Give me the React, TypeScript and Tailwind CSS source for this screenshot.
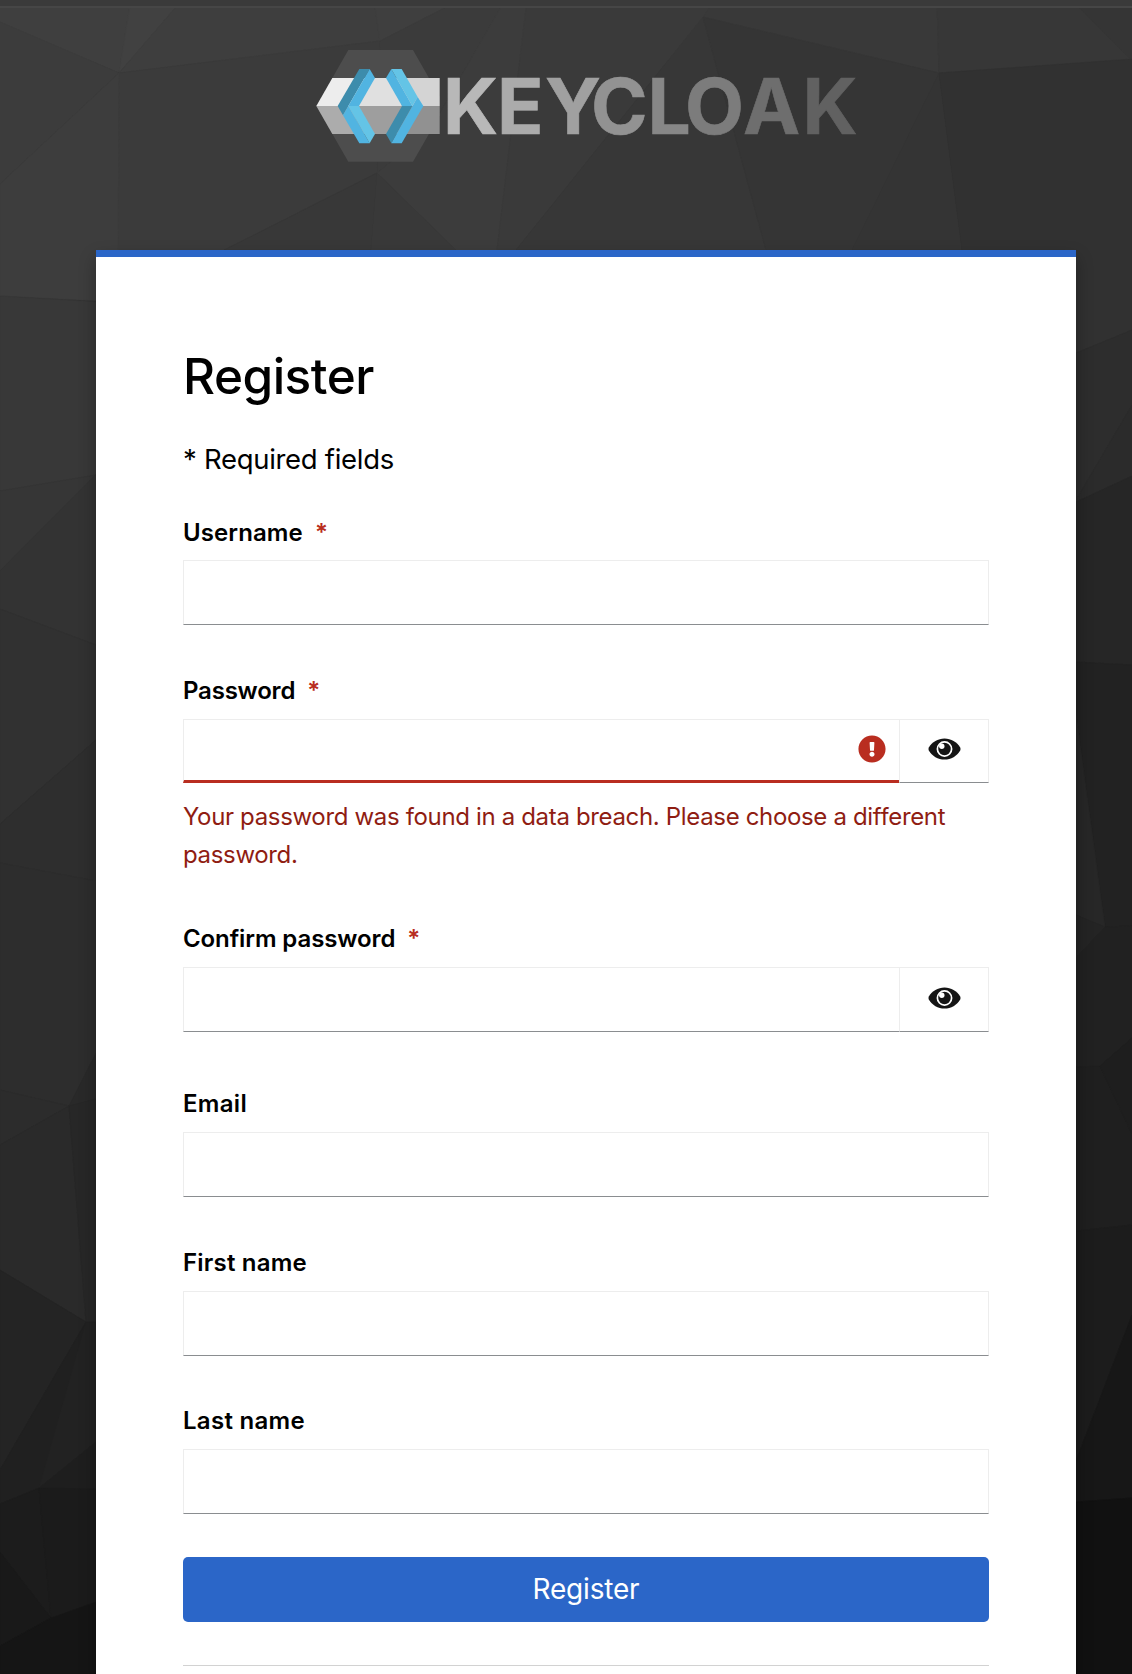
import React from "react";
import { FaExclamationCircle } from "react-icons/fa";

type Facet = { points: string; fill: string };

const facets: Facet[] = [
  // top band
  { points: "0,0 1132,0 1132,60 0,60", fill: "#3d3d3d" },
  { points: "0,0 131,0 119,73 0,22", fill: "#3f3f3f" },
  { points: "131,0 182,0 119,73", fill: "#414141" },
  { points: "0,22 119,73 0,184", fill: "#3c3c3c" },
  { points: "182,0 374,0 380,41 119,73", fill: "#3e3e3e" },
  { points: "374,0 460,0 380,41", fill: "#3f3f3f" },
  { points: "119,73 380,41 377,173 224,250 118,250", fill: "#3b3b3b" },
  { points: "119,73 118,302 0,296 0,184", fill: "#3d3d3d" },
  { points: "460,0 505,0 430,130 377,173 380,41", fill: "#3b3b3b" },
  { points: "505,0 527,0 497,250 456,250 377,173 430,130", fill: "#3c3c3c" },
  { points: "224,250 377,173 371,250", fill: "#383838" },
  { points: "377,173 371,250 456,250", fill: "#393939" },
  { points: "527,0 715,0 703,17 516,250 497,250", fill: "#3a3a3a" },
  { points: "703,17 516,250 766,250", fill: "#373737" },
  { points: "703,17 715,0 937,0 939,73", fill: "#393939" },
  { points: "703,17 939,73 852,250 766,250", fill: "#353535" },
  { points: "937,0 1071,0 1132,60 939,73", fill: "#373737" },
  { points: "1071,0 1132,0 1132,60", fill: "#353535" },
  { points: "939,73 852,250 962,250", fill: "#343434" },
  { points: "939,73 1132,59 1132,330 1076,353 962,250", fill: "#313131" },
  // left column
  { points: "0,296 118,303 118,472 96,475 0,491", fill: "#383838" },
  { points: "0,491 96,475 0,571", fill: "#363636" },
  { points: "0,571 118,452 118,652 96,645 0,609", fill: "#333333" },
  { points: "0,609 96,645 96,740 0,824", fill: "#313131" },
  { points: "0,824 96,740 96,881 0,863", fill: "#2e2e2e" },
  { points: "0,863 96,881 96,1053 69,1106 0,1090", fill: "#2d2d2d" },
  { points: "0,1090 69,1106 0,1145", fill: "#2c2c2c" },
  { points: "69,1106 96,1053 96,1099", fill: "#292929" },
  { points: "0,1145 69,1106 86,1322 0,1270", fill: "#2a2a2a" },
  { points: "69,1106 96,1099 96,1322 86,1322", fill: "#272727" },
  { points: "0,1270 86,1322 0,1470", fill: "#242424" },
  { points: "86,1322 39,1488 0,1504 0,1470", fill: "#202020" },
  { points: "86,1322 96,1322 96,1442 39,1488", fill: "#222222" },
  { points: "39,1488 96,1442 96,1489", fill: "#1e1e1e" },
  { points: "0,1504 39,1488 51,1618 0,1552", fill: "#1c1c1c" },
  { points: "39,1488 96,1489 96,1602 51,1618", fill: "#1b1b1b" },
  { points: "0,1552 51,1618 0,1646", fill: "#191919" },
  { points: "0,1646 51,1618 96,1602 96,1674 0,1674", fill: "#151515" },
  // right column
  { points: "1076,353 1132,330 1132,405 1076,500", fill: "#2d2d2d" },
  { points: "1076,500 1132,405 1132,476 1076,502", fill: "#2b2b2b" },
  { points: "1076,502 1132,476 1132,665 1076,662", fill: "#262626" },
  { points: "1076,662 1132,665 1132,926 1105,927 1076,715", fill: "#222222" },
  { points: "1076,715 1105,927 1076,915", fill: "#272727" },
  { points: "1076,915 1105,927 1076,958", fill: "#242424" },
  { points: "1076,958 1105,927 1132,926 1132,1038 1100,1066 1076,1067", fill: "#212121" },
  { points: "1076,1067 1100,1066 1132,1134 1132,1225 1076,1231", fill: "#1f1f1f" },
  { points: "1100,1066 1132,1038 1132,1134", fill: "#1e1e1e" },
  { points: "1076,1231 1132,1225 1132,1315 1076,1461", fill: "#1c1c1c" },
  { points: "1076,1461 1132,1315 1132,1498 1076,1502", fill: "#171717" },
  { points: "1076,1502 1132,1498 1132,1674 1076,1674", fill: "#111111" },
];

function Backdrop() {
  return (
    <svg className="absolute inset-0 h-full w-full" viewBox="0 0 1132 1674" preserveAspectRatio="none" aria-hidden="true">
      {facets.map((f) => (
        <polygon key={f.points} points={f.points} fill={f.fill} stroke={f.fill} strokeWidth="0.6" />
      ))}
    </svg>
  );
}

const letters = [
  { ch: "K", x: 443, fill: "#b8b8b8" },
  { ch: "E", x: 497, fill: "#ababab" },
  { ch: "Y", x: 545, fill: "#a0a0a0" },
  { ch: "C", x: 591, fill: "#929292" },
  { ch: "L", x: 647.5, fill: "#878787" },
  { ch: "O", x: 685, fill: "#7c7c7c" },
  { ch: "A", x: 743, fill: "#6e6e6e" },
  { ch: "K", x: 802.5, fill: "#616161" },
];

function Logo() {
  return (
    <svg className="h-[112px] w-[544px]" viewBox="316 50 544 112" role="img" aria-label="Keycloak">
      <g transform="translate(300 30) scale(0.33333)">
        <path d="M145 60H339L419 200V256L339 395H145L49 228Z" fill="#4d4d4d" />
        <path d="M97 144H200L150 228H49Z" fill="#ededed" />
        <path d="M209 144H290L306 228H150Z" fill="#e0e0e0" />
        <path d="M290 144H419V228H306Z" fill="#d4d4d4" />
        <path d="M49 228H150L190 312H97Z" fill="#acacac" />
        <path d="M150 228H320L280 312H190Z" fill="#9e9e9e" />
        <path d="M320 228H419V312H268Z" fill="#919191" />
        <path d="M178 117H209L129 256L113 228Z" fill="#3d8cac" />
        <path d="M209 117L225 144L177 228H145Z" fill="#51b4e1" />
        <path d="M145 228L209 340H178L129 256Z" fill="#51b4e1" />
        <path d="M145 228H177L225 312L209 340Z" fill="#64c4e6" />
        <path d="M274 117L258 144L306 228H337Z" fill="#51b4e1" />
        <path d="M274 117H305L353 201L337 228Z" fill="#64c4e6" />
        <path d="M306 228H337L274 340L258 312Z" fill="#3d8cac" />
        <path d="M353 201L370 228L305 340H274Z" fill="#51b4e1" />
      </g>
      <text y="133.8" strokeWidth="0.6" className="font-['Inter',sans-serif] text-[76.6px] font-bold">
        {letters.map((l, i) => (
          <tspan key={i} x={l.x} fill={l.fill} stroke={l.fill}>
            {l.ch}
          </tspan>
        ))}
      </text>
    </svg>
  );
}

function EyeIcon() {
  return (
    <svg className="h-[22px] w-[33px] -translate-y-[2px]" viewBox="0 0 33 22" aria-hidden="true">
      <path
        d="M0.8 12.4C0.3 11.5 0.3 10.5 0.8 9.6C4 4 10 0.5 16.5 0.5C23 0.5 29 4 32.2 9.6C32.7 10.5 32.7 11.5 32.2 12.4C29 18 23 21.5 16.5 21.5C10 21.5 4 18 0.8 12.4Z"
        fill="#151515"
      />
      <circle cx="16.5" cy="11" r="7.1" fill="none" stroke="#ffffff" strokeWidth="1.7" />
      <circle cx="13.8" cy="8.3" r="2.7" fill="#ffffff" />
    </svg>
  );
}

function Label({ text, required, spacing }: { text: string; required?: boolean; spacing: string }) {
  return (
    <label className="flex h-9 items-start text-[24px] leading-[38px] font-semibold text-black">
      <span className={spacing}>{text}</span>
      {required && <span className="ml-3 font-semibold text-[#b92d20]">*</span>}
    </label>
  );
}

function TextInput() {
  return (
    <input
      type="text"
      className="block h-[65px] w-full border border-[#ededed] border-b-[#8a8d90] bg-white px-4 text-[24px] outline-none"
    />
  );
}

function PasswordInput({ invalid }: { invalid?: boolean }) {
  return (
    <div className={invalid ? "flex h-16 w-full" : "flex h-[65px] w-full"}>
      <div className="relative flex-1">
        <input
          type="password"
          className={
            invalid
              ? "block h-full w-full border-t border-b-[3px] border-l border-[#ededed] border-b-[#b92d20] bg-white px-4 outline-none"
              : "block h-full w-full border border-r-0 border-[#ededed] border-b-[#8a8d90] bg-white px-4 outline-none"
          }
        />
        {invalid && <FaExclamationCircle className="absolute top-4 right-[13px] size-7 text-[#b92d20]" />}
      </div>
      <button
        type="button"
        aria-label="Show password"
        className="flex w-[90px] items-center justify-center border border-[#ededed] border-b-[#8a8d90] bg-white"
      >
        <EyeIcon />
      </button>
    </div>
  );
}

export default function App() {
  return (
    <div className="relative flex h-[1674px] w-[1132px] flex-col overflow-hidden bg-[#2a2a2a] font-['Inter',sans-serif]">
      <Backdrop />
      <div className="relative h-2 shrink-0 border-b-2 border-[#464646] bg-[#3a3a3a]" />
      <header className="relative mt-[42px] flex h-[200px] shrink-0 pl-[316px]">
        <Logo />
      </header>
      <main className="relative mx-auto h-[1424px] w-[980px] shrink-0 translate-x-[20px] border-t-[7px] border-[#2b66c8] bg-white px-[87px] pt-[89px] shadow-[0_8px_16px_rgba(0,0,0,0.3)]">
        <h1 className="h-[60px] text-[49.5px] leading-[60px] font-medium tracking-[-0.5px] text-black">Register</h1>
        <p className="mt-8 h-[42px] text-[27.5px] leading-[42px] tracking-[-0.3px] text-black">* Required fields</p>

        <form className="flex flex-col pt-[34px]">
          <Label text="Username" required spacing="tracking-[0.1px]" />
          <div className="mt-[10px]">
            <TextInput />
          </div>

          <div className="mt-[47px]">
            <Label text="Password" required spacing="tracking-[-0.2px]" />
          </div>
          <div className="mt-[11px]">
            <PasswordInput invalid />
          </div>
          <p className="mt-[15px] text-[24px] leading-[38px] tracking-[-0.34px] text-[#8f1d12]">
            Your password was found in a data breach. Please choose a different
            <br />
            password.
          </p>

          <div className="mt-[46px]">
            <Label text="Confirm password" required spacing="tracking-[-0.1px]" />
          </div>
          <div className="mt-[11px]">
            <PasswordInput />
          </div>

          <div className="mt-[53px]">
            <Label text="Email" spacing="tracking-[0.3px]" />
          </div>
          <div className="mt-[11px]">
            <TextInput />
          </div>

          <div className="mt-[47px]">
            <Label text="First name" spacing="tracking-[0.2px]" />
          </div>
          <div className="mt-[11px]">
            <TextInput />
          </div>

          <div className="mt-[46px]">
            <Label text="Last name" spacing="tracking-[0.3px]" />
          </div>
          <div className="mt-[11px]">
            <TextInput />
          </div>

          <button type="button" className="mt-[43px] h-[65px] rounded-[5px] bg-[#2b66c8] text-[28px] leading-[65px] tracking-[-0.2px] text-white">
            Register
          </button>
          <hr className="mt-[43px] border-t border-[#d2d2d2]" />
        </form>
      </main>
    </div>
  );
}
